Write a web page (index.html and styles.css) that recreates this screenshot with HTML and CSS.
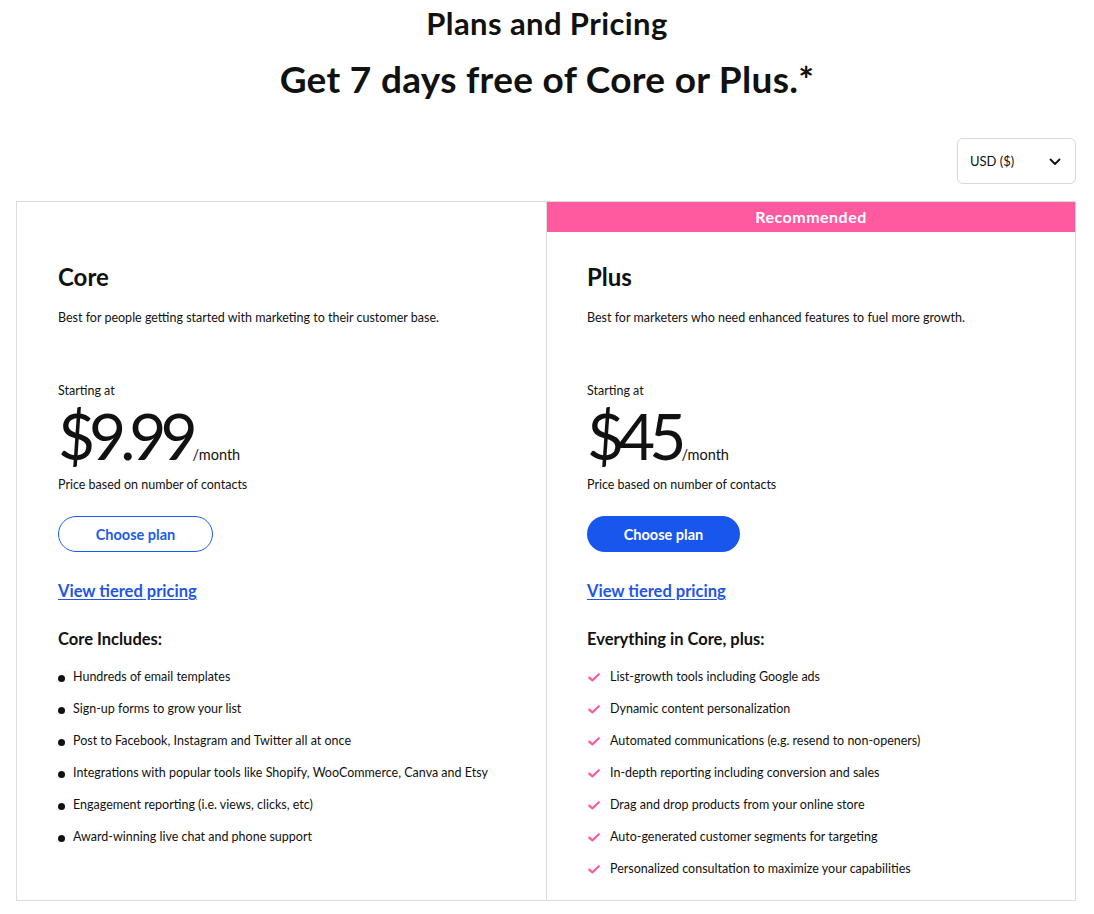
FILE: index.html
```html
<!DOCTYPE html>
<html lang="en">
<head>
<meta charset="utf-8">
<title>Plans and Pricing</title>
<link rel="stylesheet" href="styles.css">
</head>
<body>
<header class="page-head">
  <h1 class="title">Plans and Pricing</h1>
  <h2 class="subtitle">Get 7 days free of Core or Plus.*</h2>
</header>
<div class="currency-row">
  <div class="currency">
    <span>USD ($)</span>
    <svg class="chev" width="12" height="8" viewBox="0 0 12 8"><path d="M1.5 1.5 L6 6 L10.5 1.5" fill="none" stroke="#111" stroke-width="1.8" stroke-linecap="round" stroke-linejoin="round"/></svg>
  </div>
</div>
<section class="plans">
  <div class="plan">
    <div class="banner banner-empty"></div>
    <div class="plan-body">
      <h3 class="plan-name">Core</h3>
      <p class="plan-desc">Best for people getting started with marketing to their customer base.</p>
      <p class="starting">Starting at</p>
      <div class="price"><span class="amount">$9.99</span><span class="per">/month</span></div>
      <p class="basis">Price based on number of contacts</p>
      <a class="btn btn-outline" href="#">Choose plan</a>
      <a class="tiered" href="#">View tiered pricing</a>
      <h4 class="includes">Core Includes:</h4>
      <ul class="features bullets">
        <li>Hundreds of email templates</li>
        <li>Sign-up forms to grow your list</li>
        <li>Post to Facebook, Instagram and Twitter all at once</li>
        <li>Integrations with popular tools like Shopify, WooCommerce, Canva and Etsy</li>
        <li>Engagement reporting (i.e. views, clicks, etc)</li>
        <li>Award-winning live chat and phone support</li>
      </ul>
    </div>
  </div>
  <div class="plan plan-plus">
    <div class="banner">Recommended</div>
    <div class="plan-body">
      <h3 class="plan-name">Plus</h3>
      <p class="plan-desc">Best for marketers who need enhanced features to fuel more growth.</p>
      <p class="starting">Starting at</p>
      <div class="price"><span class="amount">$45</span><span class="per">/month</span></div>
      <p class="basis">Price based on number of contacts</p>
      <a class="btn btn-solid" href="#">Choose plan</a>
      <a class="tiered" href="#">View tiered pricing</a>
      <h4 class="includes">Everything in Core, plus:</h4>
      <ul class="features checks">
        <li>List-growth tools including Google ads</li>
        <li>Dynamic content personalization</li>
        <li>Automated communications (e.g. resend to non-openers)</li>
        <li>In-depth reporting including conversion and sales</li>
        <li>Drag and drop products from your online store</li>
        <li>Auto-generated customer segments for targeting</li>
        <li>Personalized consultation to maximize your capabilities</li>
      </ul>
    </div>
  </div>
</section>
</body>
</html>
```
FILE: styles.css
```css
* { box-sizing: border-box; }
html, body { margin: 0; padding: 0; background: #fff; }
body {
  font-family: Lato, "Noto Sans", sans-serif;
  color: #111;
}
.page-head { text-align: center; padding-top: 5px; }
.title {
  margin: 0;
  font-size: 31px;
  line-height: 36px;
  font-weight: 700;
  letter-spacing: 0.4px;
}
.subtitle {
  margin: 16px 0 0;
  font-size: 37px;
  line-height: 44px;
  font-weight: 700;
  letter-spacing: 0.3px;
}
.currency-row {
  display: flex;
  justify-content: flex-end;
  padding: 0 18px 0 16px;
  margin-top: 37px;
}
.currency {
  width: 119px;
  height: 46px;
  border: 1px solid #d9d9d9;
  border-radius: 6px;
  display: flex;
  align-items: center;
  justify-content: space-between;
  padding: 0 14px 0 12px;
  font-size: 13px;
  color: #111;
}
.chev { margin-top: 2px; }
.plans {
  margin: 17px 0 0 16px;
  width: 1060px;
  border: 1px solid #dcdcd8;
  display: grid;
  grid-template-columns: 529px 1fr;
}
.plan-plus { border-left: 1px solid #dcdcd8; }
.banner {
  height: 30px;
  background: #ff5a9f;
  color: #fff;
  font-weight: 700;
  font-size: 16px;
  letter-spacing: 0.5px;
  line-height: 30px;
  text-align: center;
}
.banner-empty { background: transparent; }
.plan-body {
  padding: 31px 40px 21px 41px;
  display: flex;
  flex-direction: column;
  align-items: flex-start;
}
.plan-plus .plan-body { padding-left: 40px; }
.plan-name {
  margin: 0;
  font-size: 24px;
  line-height: 28px;
  font-weight: 700;
}
.plan-desc {
  margin: 17px 0 0;
  font-size: 12.5px;
  line-height: 20px;
}
.starting {
  margin: 53px 0 0;
  font-size: 12.5px;
  line-height: 20px;
}
.price {
  margin-top: 1px;
  display: flex;
  align-items: baseline;
  height: 68px;
}
.amount {
  font-size: 64px;
  line-height: 68px;
  font-weight: 400;
  letter-spacing: -6px;
}
.per {
  font-size: 14.5px;
  margin-left: 1px;
}
.basis {
  margin: 5px 0 0;
  font-size: 12.5px;
  line-height: 20px;
}
.btn {
  margin-top: 21px;
  width: 155px;
  height: 36px;
  border-radius: 18px;
  display: flex;
  align-items: center;
  justify-content: center;
  text-decoration: none;
  font-size: 14.5px;
  font-weight: 700;
}
.btn-outline {
  border: 1px solid #1c5bec;
  color: #1c5bec;
  background: #fff;
}
.btn-solid {
  width: 153px;
  background: #1856ed;
  color: #fff;
}
.tiered {
  margin-top: 28px;
  font-size: 16.5px;
  line-height: 22px;
  font-weight: 700;
  color: #1f55e6;
  text-decoration: underline;
  text-underline-offset: 2px;
}
.includes {
  margin: 26px 0 0;
  font-size: 16.5px;
  line-height: 22px;
  font-weight: 700;
}
.features {
  list-style: none;
  margin: 17px 0 0;
  padding: 0;
  display: flex;
  flex-direction: column;
  gap: 12px;
}
.features li {
  font-size: 12.5px;
  line-height: 20px;
  position: relative;
}
.bullets li { padding-left: 15px; }
.bullets li::before {
  content: "";
  position: absolute;
  left: 0;
  top: 8px;
  width: 7px;
  height: 7px;
  border-radius: 50%;
  background: #111;
}
.checks li { padding-left: 23px; }
.checks li::before {
  content: "";
  position: absolute;
  left: 1px;
  top: 6px;
  width: 12px;
  height: 9px;
  background: url("data:image/svg+xml;utf8,<svg xmlns='http://www.w3.org/2000/svg' width='12' height='9' viewBox='0 0 12 9'><path d='M1.3 4.6 L4.4 7.4 L10.8 1.2' fill='none' stroke='%23ff5a9f' stroke-width='2.2' stroke-linecap='round' stroke-linejoin='round'/></svg>") no-repeat;
}
```
